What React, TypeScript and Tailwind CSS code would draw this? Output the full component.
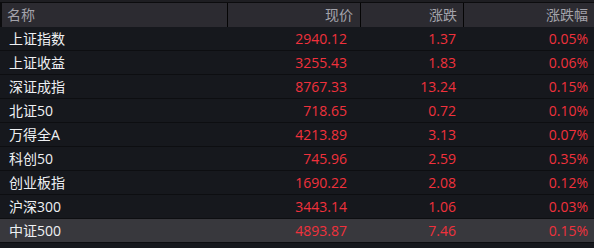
import React from "react";

const rows = [
  ["上证指数", "2940.12", "1.37", "0.05%"],
  ["上证收益", "3255.43", "1.83", "0.06%"],
  ["深证成指", "8767.33", "13.24", "0.15%"],
  ["北证50", "718.65", "0.72", "0.10%"],
  ["万得全A", "4213.89", "3.13", "0.07%"],
  ["科创50", "745.96", "2.59", "0.35%"],
  ["创业板指", "1690.22", "2.08", "0.12%"],
  ["沪深300", "3443.14", "1.06", "0.03%"],
  ["中证500", "4893.87", "7.46", "0.15%"],
];

export default function App() {
  return (
    <div
      className="w-[594px] h-[248px] bg-[#16181d] overflow-hidden text-[14px]"
      style={{ fontFamily: '"Open Sans", "Noto Sans CJK SC", sans-serif' }}
    >
      <div className="h-[3px] bg-[#1e1e22] border-b border-[#0c0c0e]" />
      <div className="flex h-[24px] bg-[#2c2b31] text-[#a3a3ab] border-l-2 border-[#0c0c0e] leading-[24px]">
        <div className="w-[226px] pl-[5px] border-r border-[#050505]">名称</div>
        <div className="w-[133px] pr-[7px] text-right border-r border-[#050505]">现价</div>
        <div className="w-[103px] pr-[6px] text-right border-r border-[#050505]">涨跌</div>
        <div className="flex-1 pr-[6px] text-right">涨跌幅</div>
      </div>
      {rows.map((r, i) => (
        <div
          key={i}
          className={
            "flex h-[24px] leading-[23px] border-b border-[#0d0e11] " +
            (i === rows.length - 1 ? "bg-[#38383d]" : "")
          }
        >
          <div className="w-[229px] pl-[9px] text-[#eef0f3]">{r[0]}</div>
          <div className="w-[118px] text-right text-[#f0313c]">{r[1]}</div>
          <div className="w-[109px] text-right text-[#f0313c]">{r[2]}</div>
          <div className="w-[132px] text-right text-[#f0313c]">{r[3]}</div>
        </div>
      ))}
    </div>
  );
}
